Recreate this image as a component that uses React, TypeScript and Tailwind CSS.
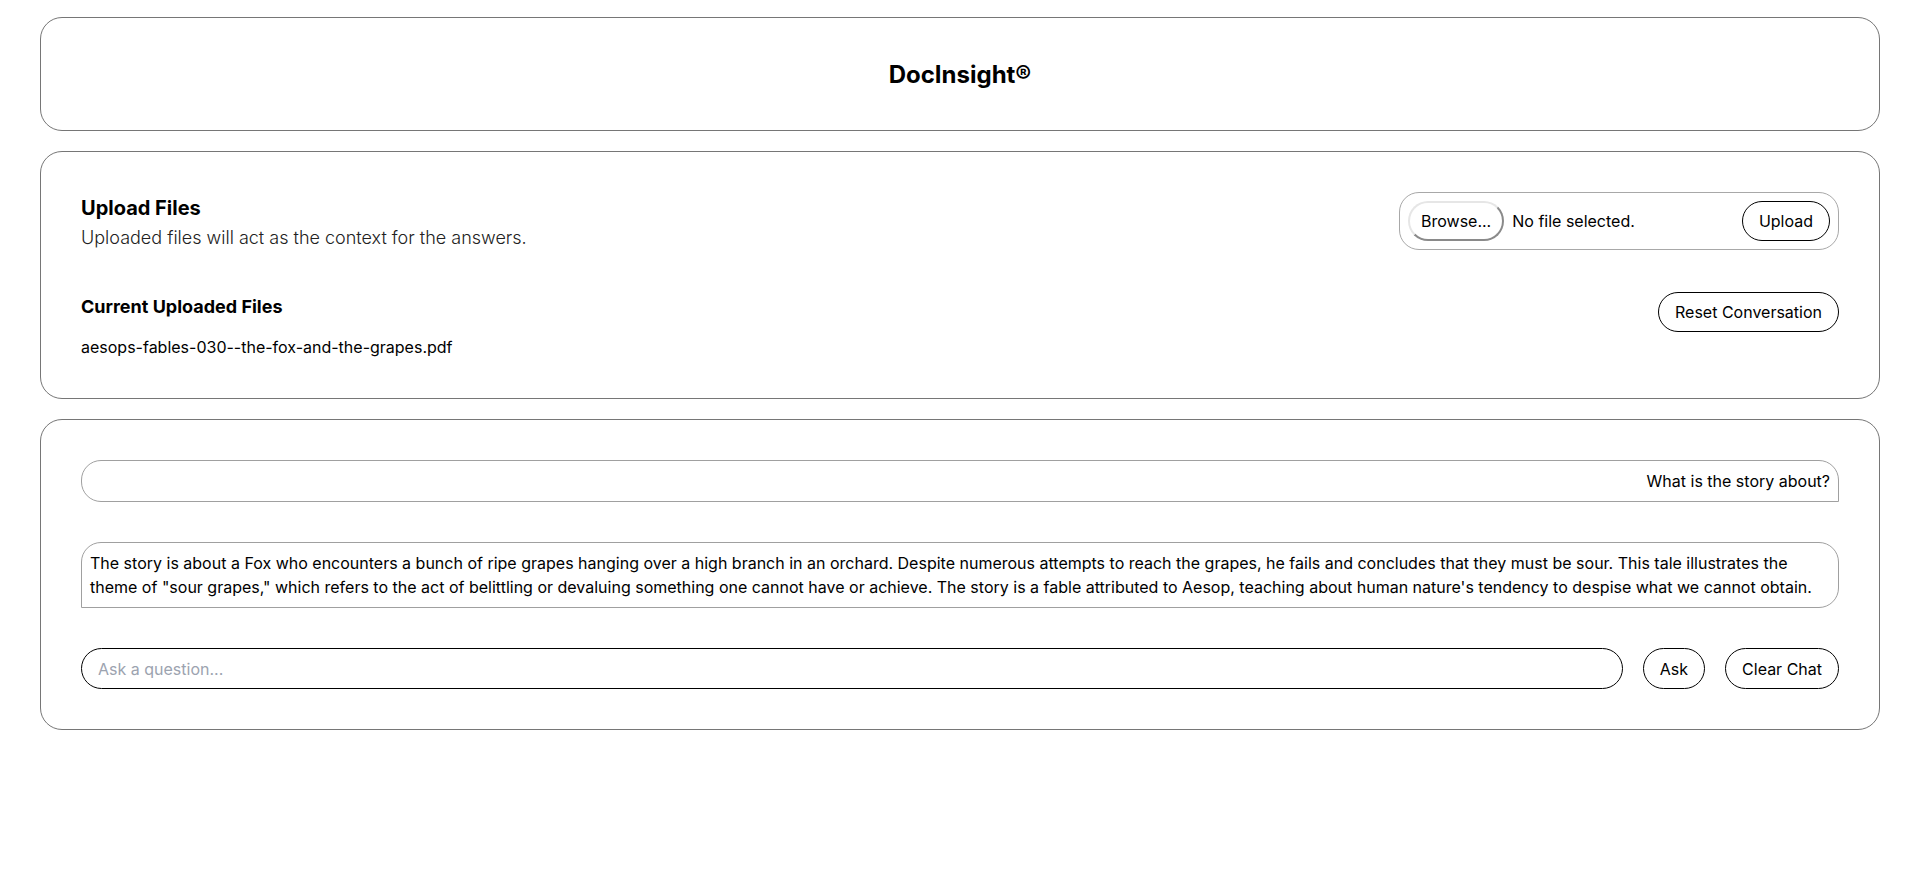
import React from "react";

const answer =
  "The story is about a Fox who encounters a bunch of ripe grapes hanging over a high branch in an orchard. Despite numerous attempts to reach the grapes, he fails and concludes that they must be sour. This tale illustrates the theme of \"sour grapes,\" which refers to the act of belittling or devaluing something one cannot have or achieve. The story is a fable attributed to Aesop, teaching about human nature's tendency to despise what we cannot obtain.";

function Card({ children, className = "" }: { children: React.ReactNode; className?: string }) {
  return (
    <section className={`border border-[#767676] rounded-[22px] bg-white px-10 pt-10 ${className}`}>
      {children}
    </section>
  );
}

function PillButton({ children }: { children: React.ReactNode }) {
  return (
    <button className="h-10 px-4 border border-black rounded-full bg-white text-base text-black whitespace-nowrap">
      {children}
    </button>
  );
}

function FileInput() {
  return (
    <div className="flex items-center justify-between w-[440px] p-2 border border-[#a8a8a8] rounded-[20px]">
      <div className="flex items-center gap-2">
        <span className="h-10 px-[11px] flex items-center rounded-full bg-white border-2 border-t-[#e6e6e6] border-l-[#e6e6e6] border-b-[#8a8a8a] border-r-[#8a8a8a] text-base">
          Browse...
        </span>
        <span className="text-base">No file selected.</span>
      </div>
      <PillButton>Upload</PillButton>
    </div>
  );
}

function Message({ text, fromUser }: { text: string; fromUser?: boolean }) {
  return (
    <div
      className={`border border-[#a0a0a0] rounded-[20px] px-2 py-2 text-base leading-6 ${
        fromUser ? "rounded-br-none text-right" : "rounded-bl-none"
      }`}
    >
      {text}
    </div>
  );
}

export default function App() {
  return (
    <div className="min-h-[880px] bg-white px-10 pt-[17px] flex flex-col gap-5 text-black font-['Inter',sans-serif]">
      <Card className="pb-[39px]">
        <h1 className="text-center text-2xl leading-8 pt-px font-bold">DocInsight®</h1>
      </Card>

      <Card className="flex flex-col gap-10 pb-[39px]">
        <div className="flex items-start justify-between">
          <div>
            <h2 className="text-xl leading-8 font-bold">Upload Files</h2>
            <p className="text-lg leading-7 font-light text-[#222]">
              Uploaded files will act as the context for the answers.
            </p>
          </div>
          <FileInput />
        </div>
        <div className="flex items-start justify-between">
          <div>
            <h3 className="text-lg leading-7 pt-px font-bold">Current Uploaded Files</h3>
            <p className="mt-3.5 text-base leading-6">aesops-fables-030--the-fox-and-the-grapes.pdf</p>
          </div>
          <PillButton>Reset Conversation</PillButton>
        </div>
      </Card>

      <Card className="flex flex-col gap-10 pb-10">
        <Message text="What is the story about?" fromUser />
        <Message text={answer} />
        <div className="flex items-center gap-5">
          <input
            className="flex-1 h-[41px] px-4 border border-black rounded-full text-base outline-none placeholder:text-[#9ca3af]"
            placeholder="Ask a question..."
          />
          <button className="h-[41px] px-4 border border-black rounded-full bg-white text-base whitespace-nowrap">
            Ask
          </button>
          <button className="h-[41px] px-4 border border-black rounded-full bg-white text-base whitespace-nowrap">
            Clear Chat
          </button>
        </div>
      </Card>
    </div>
  );
}
